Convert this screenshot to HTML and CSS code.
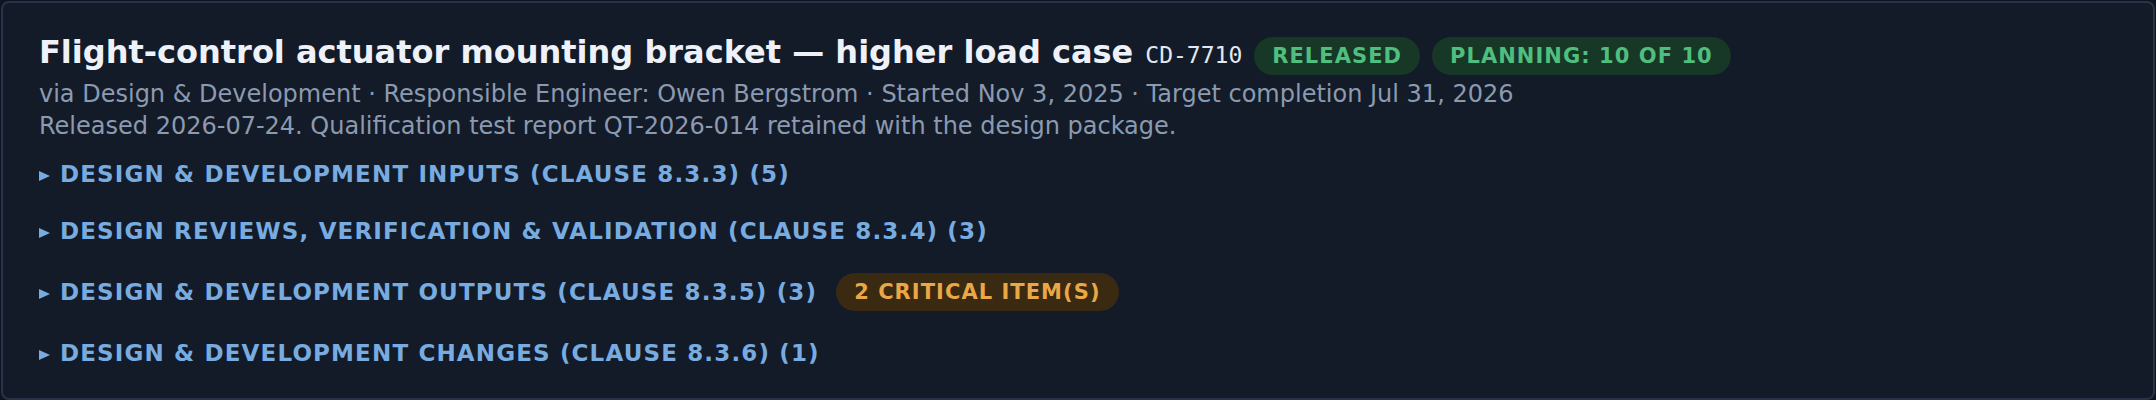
FILE: index.html
```html
<!DOCTYPE html>
<html lang="en">
<head>
<meta charset="utf-8">
<title>CD-7710</title>
<link rel="stylesheet" href="styles.css">
</head>
<body>
<div class="card">
  <div class="title-row">
    <h1 class="title">Flight-control actuator mounting bracket — higher load case</h1>
    <span class="code">CD-7710</span>
    <span class="pill pill-green">RELEASED</span>
    <span class="pill pill-green">PLANNING: 10 OF 10</span>
  </div>
  <div class="meta first">via Design &amp; Development · Responsible Engineer: Owen Bergstrom · Started Nov 3, 2025 · Target completion Jul 31, 2026</div>
  <div class="meta">Released 2026-07-24. Qualification test report QT-2026-014 retained with the design package.</div>
  <div class="sections">
    <div class="section"><span class="caret"></span><span class="sec-title">DESIGN &amp; DEVELOPMENT INPUTS (CLAUSE 8.3.3) (5)</span></div>
    <div class="section"><span class="caret"></span><span class="sec-title">DESIGN REVIEWS, VERIFICATION &amp; VALIDATION (CLAUSE 8.3.4) (3)</span></div>
    <div class="section"><span class="caret"></span><span class="sec-title">DESIGN &amp; DEVELOPMENT OUTPUTS (CLAUSE 8.3.5) (3)</span><span class="pill pill-amber">2 CRITICAL ITEM(S)</span></div>
    <div class="section"><span class="caret"></span><span class="sec-title">DESIGN &amp; DEVELOPMENT CHANGES (CLAUSE 8.3.6) (1)</span></div>
  </div>
</div>
</body>
</html>
```

FILE: styles.css
```css
* { box-sizing: border-box; }
html, body {
  margin: 0;
  padding: 0;
  background: #0e1520;
}
body {
  font-family: "DejaVu Sans", "Liberation Sans", sans-serif;
  padding: 1px 1px 0 1px;
}
.card {
  background: #131b28;
  border: 2px solid #28334a;
  border-radius: 8px;
  padding: 30px 36px 16px 36px;
  min-height: 398px;
}
.title-row {
  display: flex;
  align-items: baseline;
  gap: 12px;
  flex-wrap: wrap;
}
.title {
  margin: 0;
  font-size: 32px;
  font-weight: bold;
  color: #eef2f8;
  line-height: 38px;
}
.code {
  font-family: "DejaVu Sans Mono", "Liberation Mono", monospace;
  font-size: 23px;
  color: #e3e8f0;
}
.pill {
  display: inline-block;
  border-radius: 19px;
  font-weight: bold;
  font-size: 21px;
  letter-spacing: 0.05em;
  line-height: 38px;
  padding: 0 18px;
}
.pill-green {
  background: #173727;
  color: #4fbf80;
}
.pill-amber {
  background: #3a2a12;
  color: #e9a745;
  margin-left: 19px;
}
.meta {
  font-size: 24px;
  line-height: 32px;
  color: #8c9ab0;
}
.meta.first { margin-top: 3px; }
.sections {
  margin-top: 4px;
}
.section {
  display: flex;
  align-items: center;
  padding: 13px 0;
  min-height: 57px;
}
.section:last-child { padding-top: 14px; }
.caret {
  width: 0;
  height: 0;
  border-left: 11px solid #78ace0;
  border-top: 5.5px solid transparent;
  border-bottom: 5.5px solid transparent;
  margin: 3px 10px 0 0;
}
.sec-title {
  font-size: 23px;
  font-weight: bold;
  letter-spacing: 0.05em;
  color: #78ace0;
  line-height: 31px;
}
```
